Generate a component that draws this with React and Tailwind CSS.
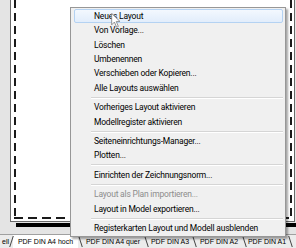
import React from "react";

const items = [
  { t: "Neues Layout", hl: true },
  { t: "Von Vorlage..." },
  { t: "Löschen" },
  { t: "Umbenennen" },
  { t: "Verschieben oder Kopieren..." },
  { t: "Alle Layouts auswählen" },
  { sep: true },
  { t: "Vorheriges Layout aktivieren" },
  { t: "Modellregister aktivieren" },
  { sep: true },
  { t: "Seiteneinrichtungs-Manager..." },
  { t: "Plotten..." },
  { sep: true },
  { t: "Einrichten der Zeichnungsnorm..." },
  { sep: true },
  { t: "Layout als Plan importieren...", dis: true },
  { t: "Layout in Model exportieren..." },
  { sep: true },
  { t: "Registerkarten Layout und Modell ausblenden" },
];

function Sep({ dir }) {
  return (
    <div className="w-[4px] h-full flex justify-center items-center">
      <div
        className={
          "w-px h-[11px] bg-[#444] " +
          (dir === "back" ? "-skew-x-[18deg]" : "skew-x-[18deg]")
        }
      />
    </div>
  );
}

export default function App() {
  return (
    <div className="relative w-[296px] h-[248px] overflow-hidden bg-[#e4e4e4] font-['Liberation_Sans',Arial,sans-serif]">
      <div className="flex flex-col h-full">
        {/* drawing area */}
        <div className="h-[234px] pl-[10px]">
          <div className="h-[222px] w-[285px] border-l border-r border-b border-[#6a6a6a] bg-white pl-[3px] pr-[2px]">
            <div className="h-[219px] flex flex-col">
              <div className="flex-1 flex justify-between">
                <div className="w-[2px] h-full bg-[repeating-linear-gradient(to_bottom,#1a1a1a_0px,#1a1a1a_8px,transparent_8px,transparent_13px)]" />
                <div className="w-[2px] h-full bg-[repeating-linear-gradient(to_bottom,#1a1a1a_0px,#1a1a1a_8px,transparent_8px,transparent_13px)]" />
              </div>
              <div className="h-[2px] bg-[repeating-linear-gradient(to_right,#1a1a1a_0px,#1a1a1a_9px,transparent_9px,transparent_14px)]" />
            </div>
          </div>
          <div className="ml-[6px] mt-[1px] h-[4px] bg-black" />
        </div>
        {/* tab strip */}
        <div className="h-[14px] flex items-stretch border-t border-[#a0a0a0] bg-[#ececec] text-[7px] leading-none text-black">
          <div className="w-[9px] flex justify-end items-center whitespace-nowrap">
            ell
          </div>
          <Sep dir="back" />
          <div className="w-[65px] bg-white flex justify-center items-center whitespace-nowrap">
            PDF DIN A4 hoch
          </div>
          <Sep />
          <div className="w-[62px] flex justify-center items-center whitespace-nowrap">
            PDF DIN A4 quer
          </div>
          <Sep />
          <div className="w-[44px] flex justify-center items-center whitespace-nowrap">
            PDF DIN A3
          </div>
          <Sep />
          <div className="w-[46px] flex justify-center items-center whitespace-nowrap">
            PDF DIN A2
          </div>
          <Sep />
          <div className="w-[42px] flex justify-center items-center whitespace-nowrap">
            PDF DIN A1
          </div>
          <Sep />
        </div>
      </div>

      {/* context menu */}
      <div className="absolute left-[70px] top-[7px] w-[216px] border border-[#979797] bg-[#f0f0f0] px-[2px] py-[1px] shadow-[2px_2px_2px_rgba(0,0,0,0.35)] text-[8.5px] tracking-[-0.2px] text-black font-['Roboto',Arial,sans-serif]">
        {items.map((it, i) =>
          it.sep ? (
            <div key={i} className="h-[5px] pl-[18px] flex flex-col justify-center">
              <div className="h-px bg-[#d5d5d5]" />
              <div className="h-px bg-white" />
            </div>
          ) : it.hl ? (
            <div
              key={i}
              className="h-[14.4px] ml-[1px] pl-[19px] rounded-[2px] border border-[#b4d2f2] bg-linear-to-b from-[#f3f8fe] to-[#e2edfb] flex items-center whitespace-nowrap"
            >
              {it.t}
            </div>
          ) : (
            <div
              key={i}
              className={
                "h-[14.4px] pl-[21px] flex items-center whitespace-nowrap " +
                (it.dis ? "text-[#8d8d8d]" : "")
              }
            >
              {it.t}
            </div>
          )
        )}
      </div>

      {/* mouse cursor */}
      <svg
        className="absolute left-[111px] top-[13px]"
        width="10"
        height="15"
        viewBox="0 0 12 19"
      >
        <path
          d="M0.5 0.5 L0.5 15 L4 11.5 L6.8 18 L9 17 L6.3 10.7 L11 10.7 Z"
          fill="#fff"
          stroke="#7a7a7a"
          strokeWidth="1"
          strokeLinejoin="round"
        />
      </svg>
    </div>
  );
}
